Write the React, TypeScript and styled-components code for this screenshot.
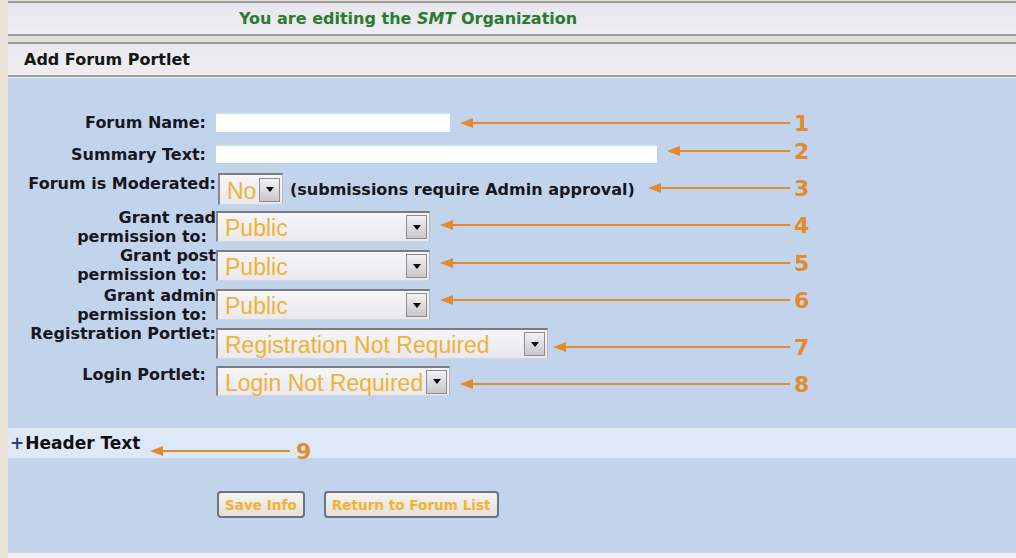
import styled, { createGlobalStyle } from "styled-components";

const GlobalStyle = createGlobalStyle`
  html, body {
    margin: 0;
    padding: 0;
    background: #e9e2d6;
  }
  * {
    box-sizing: border-box;
  }
`;

const labelFont = `"DejaVu Sans", Verdana, sans-serif`;
const selectFont = `"Liberation Sans", Arial, sans-serif`;

interface SelectProps {
  value: string;
  width: number;
  height: number;
}

const Select = ({ value, width, height }: SelectProps) => (
  <SelectBox style={{ width, height }}>
    <SelectValue>{value}</SelectValue>
    <DropButton>
      <svg width="8" height="5" viewBox="0 0 8 5">
        <path d="M0 0 H8 L4 5 Z" fill="#000" />
      </svg>
    </DropButton>
  </SelectBox>
);

const arrows = [
  { n: "1", y: 123, tip: 460, end: 790, num: 794 },
  { n: "2", y: 151, tip: 667, end: 790, num: 794 },
  { n: "3", y: 188, tip: 648, end: 790, num: 794 },
  { n: "4", y: 225, tip: 440, end: 790, num: 794 },
  { n: "5", y: 263, tip: 440, end: 790, num: 794 },
  { n: "6", y: 300, tip: 440, end: 790, num: 794 },
  { n: "7", y: 347, tip: 553, end: 790, num: 794 },
  { n: "8", y: 384, tip: 460, end: 790, num: 794 },
  { n: "9", y: 451, tip: 150, end: 290, num: 296 },
];

export default function App() {
  return (
    <Page>
      <GlobalStyle />
      <TopBar>
        You are editing the <em>SMT</em> Organization
      </TopBar>
      <Spacer />
      <PortletHeader>Add Forum Portlet</PortletHeader>
      <Content>
        <Form>
          <Field $top={0} $h={19}>
            <Label $pad={10}>Forum Name:</Label>
            <TextInput $width={234} />
          </Field>
          <Field $top={13} $h={18}>
            <Label $pad={10}>Summary Text:</Label>
            <TextInput $width={441} />
          </Field>
          <Field $top={10} $h={32} $center>
            <Label $offset={-11}>Forum is Moderated:</Label>
            <Small>
              <Select value="No" width={65} height={32} />
            </Small>
            <Note>(submissions require Admin approval)</Note>
          </Field>
          <Field $top={6} $h={31}>
            <Label $offset={-3}>
              Grant read
              <br />
              <Inner>permission to:</Inner>
            </Label>
            <Select value="Public" width={214} height={31} />
          </Field>
          <Field $top={8} $h={31}>
            <Label $offset={-4}>
              Grant post
              <br />
              <Inner>permission to:</Inner>
            </Label>
            <Select value="Public" width={214} height={31} />
          </Field>
          <Field $top={8} $h={31}>
            <Label $offset={-3}>
              Grant admin
              <br />
              <Inner>permission to:</Inner>
            </Label>
            <Select value="Public" width={214} height={31} />
          </Field>
          <Field $top={8} $h={31}>
            <Label $offset={-4}>Registration Portlet:</Label>
            <Select value="Registration Not Required" width={332} height={31} />
          </Field>
          <Field $top={7} $h={30}>
            <Label $offset={-1} $pad={10}>Login Portlet:</Label>
            <Select value="Login Not Required" width={234} height={30} />
          </Field>
        </Form>
        <SectionToggle>
          <Plus>+</Plus>Header Text
        </SectionToggle>
        <Buttons>
          <ActionButton>Save Info</ActionButton>
          <ActionButton>Return to Forum List</ActionButton>
        </Buttons>
      </Content>
      <Footer />
      <Annotations width="1016" height="558" viewBox="0 0 1016 558">
        {arrows.map((a) => (
          <g key={a.n}>
            <line x1={a.tip + 10} y1={a.y} x2={a.end} y2={a.y} stroke="#e38a2c" strokeWidth="2" />
            <path d={`M${a.tip} ${a.y} L${a.tip + 13} ${a.y - 5} L${a.tip + 13} ${a.y + 5} Z`} fill="#e38a2c" />
            <text x={a.num} y={a.y + 8} fill="#e38a2c" fontSize="22" fontWeight="bold" fontFamily={labelFont}>
              {a.n}
            </text>
          </g>
        ))}
      </Annotations>
    </Page>
  );
}

const Page = styled.div`
  position: relative;
  width: 1016px;
  height: 558px;
  padding-left: 8px;
  display: flex;
  flex-direction: column;
  overflow: hidden;
  background: #e9e2d6;
  font-family: ${labelFont};
`;

const TopBar = styled.div`
  height: 35px;
  margin-top: 1px;
  border-top: 2px solid #9c9c9c;
  border-bottom: 2px solid #9c9c9c;
  background: linear-gradient(#e6e6ec, #eeeef4);
  padding-left: 231px;
  display: flex;
  align-items: center;
  font-size: 16px;
  font-weight: bold;
  color: #2b7a2f;
  white-space: pre;

  em {
    font-style: italic;
  }
`;

const Spacer = styled.div`
  height: 6px;
  background: #e2e0d6;
`;

const PortletHeader = styled.div`
  height: 35px;
  border-top: 2px solid #9c9c9c;
  border-bottom: 2px solid #9c9c9c;
  background: linear-gradient(#e8e8ee, #eeeef2);
  padding-left: 16px;
  display: flex;
  align-items: center;
  font-size: 16px;
  font-weight: bold;
  color: #151515;
`;

const Content = styled.div`
  flex: 1;
  background: #c2d4ec;
  border-top: 1px solid #e8eef8;
  padding-top: 35px;
`;

const Form = styled.div`
  display: flex;
  flex-direction: column;
`;

const Field = styled.div<{ $top: number; $h: number; $center?: boolean }>`
  display: flex;
  align-items: ${(p) => (p.$center ? "center" : "flex-start")};
  margin-top: ${(p) => p.$top}px;
  height: ${(p) => p.$h}px;
`;

const Label = styled.div<{ $pad?: number; $offset?: number }>`
  width: 208px;
  flex: none;
  text-align: right;
  padding-right: ${(p) => p.$pad ?? 0}px;
  margin-top: ${(p) => p.$offset ?? 0}px;
  font-size: 16px;
  line-height: 19px;
  font-weight: bold;
  color: #16161e;
  white-space: nowrap;
`;

const Inner = styled.span`
  margin-right: 9px;
`;

const TextInput = styled.div<{ $width: number }>`
  width: ${(p) => p.$width}px;
  height: 100%;
  background: #ffffff;
  border-top: 1px solid #d8dde6;
`;

const Small = styled.div`
  margin-left: 2px;
  display: flex;
`;

const SelectBox = styled.div`
  display: flex;
  align-items: center;
  flex: none;
  border-top: 2px solid #7c7c80;
  border-left: 2px solid #8a8a8e;
  border-right: 1px solid #b8b8be;
  border-bottom: 1px solid #d4d6dc;
  background: linear-gradient(#f6f6f9, #e8e8ee);
  padding: 0 2px 0 7px;
`;

const SelectValue = styled.span`
  flex: 1;
  padding-top: 3px;
  font-family: ${selectFont};
  font-size: 23px;
  color: #f2b234;
  white-space: nowrap;
  overflow: hidden;
`;

const DropButton = styled.div`
  width: 21px;
  height: 24px;
  flex: none;
  display: flex;
  align-items: center;
  justify-content: center;
  border: 1px solid #8c8c90;
  background: linear-gradient(#f2f2f4, #c8c8cc);
`;

const Note = styled.span`
  margin-left: 7px;
  font-size: 16px;
  font-weight: bold;
  color: #16161e;
  white-space: nowrap;
`;

const SectionToggle = styled.div`
  margin-top: 32px;
  height: 30px;
  background: #dde8f8;
  padding-left: 2px;
  display: flex;
  align-items: center;
  font-size: 17px;
  font-weight: bold;
  color: #111111;
`;

const Plus = styled.span`
  color: #2b3a86;
  margin-right: 1px;
`;

const Buttons = styled.div`
  display: flex;
  gap: 19px;
  padding: 33px 0 0 209px;
`;

const ActionButton = styled.button`
  height: 27px;
  padding: 0 6px;
  border: 2px solid #6c7282;
  border-radius: 4px;
  background: linear-gradient(#f6f4f0, #e4e0dc);
  font-family: ${labelFont};
  font-size: 13.6px;
  font-weight: bold;
  color: #f2b234;
`;

const Footer = styled.div`
  height: 7px;
  border-top: 2px solid #d2d2d8;
  background: #efeff2;
`;

const Annotations = styled.svg`
  position: absolute;
  top: 0;
  left: 0;
  pointer-events: none;
`;
